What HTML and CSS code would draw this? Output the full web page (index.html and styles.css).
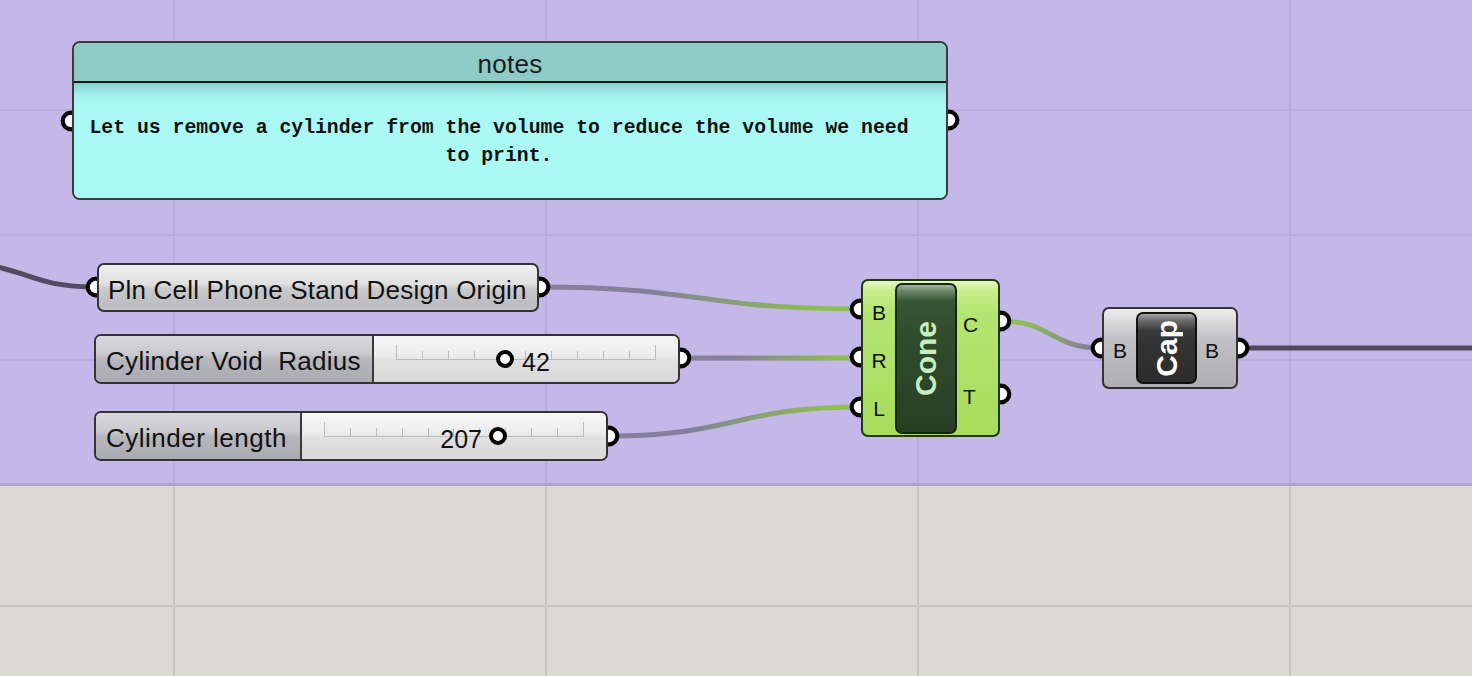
FILE: index.html
```html
<!DOCTYPE html>
<html lang="en">
<head>
<meta charset="utf-8">
<title>Grasshopper canvas</title>
<link rel="stylesheet" href="styles.css">
</head>
<body>
<div class="canvas">
  <svg class="backdrop" width="1472" height="676" viewBox="0 0 1472 676" xmlns="http://www.w3.org/2000/svg">
    <defs>
      <linearGradient id="wPln" gradientUnits="userSpaceOnUse" x1="539" y1="0" x2="861" y2="0">
        <stop offset="0" stop-color="#86819a"/>
        <stop offset="0.35" stop-color="#84809a"/>
        <stop offset="0.85" stop-color="#8cbd53"/>
        <stop offset="1" stop-color="#8dc04f"/>
      </linearGradient>
      <linearGradient id="wRad" gradientUnits="userSpaceOnUse" x1="680" y1="0" x2="861" y2="0">
        <stop offset="0" stop-color="#86819a"/>
        <stop offset="0.3" stop-color="#84809a"/>
        <stop offset="0.85" stop-color="#8cbd53"/>
        <stop offset="1" stop-color="#8dc04f"/>
      </linearGradient>
      <linearGradient id="wLen" gradientUnits="userSpaceOnUse" x1="608" y1="0" x2="861" y2="0">
        <stop offset="0" stop-color="#86819a"/>
        <stop offset="0.3" stop-color="#84809a"/>
        <stop offset="0.85" stop-color="#8cbd53"/>
        <stop offset="1" stop-color="#8dc04f"/>
      </linearGradient>
      <linearGradient id="wCone" gradientUnits="userSpaceOnUse" x1="1000" y1="0" x2="1102" y2="0">
        <stop offset="0" stop-color="#8dc04f"/>
        <stop offset="0.3" stop-color="#8cbb55"/>
        <stop offset="0.85" stop-color="#84809a"/>
        <stop offset="1" stop-color="#86819a"/>
      </linearGradient>
    </defs>

    <!-- canvas -->
    <rect x="0" y="0" width="1472" height="676" fill="#dcd9d3"/>
    <g stroke="#c7c4bf" stroke-width="2">
      <line x1="174" y1="485" x2="174" y2="676"/>
      <line x1="546" y1="485" x2="546" y2="676"/>
      <line x1="918" y1="485" x2="918" y2="676"/>
      <line x1="1290" y1="485" x2="1290" y2="676"/>
      <line x1="0" y1="606" x2="1472" y2="606"/>
    </g>

    <!-- group -->
    <rect x="0" y="0" width="1472" height="485" fill="#c4b8e9"/>
    <g stroke="#b9addf" stroke-width="2">
      <line x1="174" y1="0" x2="174" y2="484"/>
      <line x1="546" y1="0" x2="546" y2="484"/>
      <line x1="918" y1="0" x2="918" y2="484"/>
      <line x1="1290" y1="0" x2="1290" y2="484"/>
      <line x1="0" y1="110" x2="1472" y2="110"/>
      <line x1="0" y1="235" x2="1472" y2="235"/>
      <line x1="0" y1="360" x2="1472" y2="360"/>
    </g>
    <line x1="0" y1="484.5" x2="1472" y2="484.5" stroke="#afa4d0" stroke-width="3"/>

    <!-- wires -->
    <g fill="none" stroke-width="5" stroke-linecap="round">
      <path d="M-60 262 C30 262 20 287 97 287" stroke="#524c63"/>
      <path d="M539 287 C700 287 700 309 861 309" stroke="url(#wPln)"/>
      <path d="M680 358 L861 358" stroke="url(#wRad)"/>
      <path d="M608 436 C735 436 735 407 861 407" stroke="url(#wLen)"/>
      <path d="M1000 321 C1052 321 1050 348 1102 348" stroke="url(#wCone)"/>
      <path d="M1238 348 L1480 348" stroke="#4e495c"/>
    </g>

    <!-- grips -->
    <g fill="#ffffff" stroke="#000000" stroke-width="4.2">
      <circle cx="71" cy="121" r="8.3"/>
      <circle cx="949" cy="120" r="8.3"/>
      <circle cx="96" cy="287" r="8.3"/>
      <circle cx="540" cy="287" r="8.3"/>
      <circle cx="681" cy="358" r="8.3"/>
      <circle cx="609" cy="436" r="8.3"/>
      <circle cx="860" cy="309" r="8.3"/>
      <circle cx="860" cy="357" r="8.3"/>
      <circle cx="860" cy="407" r="8.3"/>
      <circle cx="1001" cy="321" r="8.3"/>
      <circle cx="1001" cy="394" r="8.3"/>
      <circle cx="1101" cy="348" r="8.3"/>
      <circle cx="1239" cy="348" r="8.3"/>
    </g>
  </svg>

  <div class="node panel">
    <div class="panel-head">notes</div>
    <div class="panel-body">Let us remove a cylinder from the volume to reduce the volume we need to print.</div>
  </div>

  <div class="node param param-pln">Pln Cell Phone Stand Design Origin</div>

  <div class="node slider slider-radius">
    <div class="slider-label">Cylinder Void  Radius</div>
    <div class="slider-area">
      <div class="track">
        <span class="tick end"></span><span class="tick"></span><span class="tick"></span><span class="tick"></span><span class="tick"></span><span class="tick"></span><span class="tick"></span><span class="tick"></span><span class="tick"></span><span class="tick"></span><span class="tick end"></span>
      </div>
      <span class="knob"></span>
      <span class="value">42</span>
    </div>
  </div>

  <div class="node slider slider-length">
    <div class="slider-label">Cylinder length</div>
    <div class="slider-area">
      <div class="track">
        <span class="tick end"></span><span class="tick"></span><span class="tick"></span><span class="tick"></span><span class="tick"></span><span class="tick"></span><span class="tick"></span><span class="tick"></span><span class="tick"></span><span class="tick"></span><span class="tick end"></span>
      </div>
      <span class="knob"></span>
      <span class="value">207</span>
    </div>
  </div>

  <div class="node comp cone">
    <div class="ports ports-in">
      <div class="port">B</div>
      <div class="port">R</div>
      <div class="port">L</div>
    </div>
    <div class="inner"><span class="inner-name">Cone</span></div>
    <div class="ports ports-out">
      <div class="port">C</div>
      <div class="port">T</div>
    </div>
  </div>

  <div class="node comp cap">
    <div class="ports ports-in">
      <div class="port">B</div>
    </div>
    <div class="inner"><span class="inner-name">Cap</span></div>
    <div class="ports ports-out">
      <div class="port">B</div>
    </div>
  </div>
</div>
</body>
</html>
```

FILE: styles.css
```css
* {
  box-sizing: border-box;
}

html,
body {
  margin: 0;
  padding: 0;
  width: 1472px;
  height: 676px;
  overflow: hidden;
}

body {
  font-family: "Liberation Sans", Arial, sans-serif;
  color: #111111;
}

.canvas {
  position: relative;
  width: 1472px;
  height: 676px;
  overflow: hidden;
}

.backdrop {
  position: absolute;
  left: 0;
  top: 0;
  display: block;
}

.node {
  position: absolute;
}

/* ---------- notes panel ---------- */
.panel {
  left: 72px;
  top: 41px;
  width: 876px;
  height: 159px;
  border: 2px solid #3b3b3b;
  border-radius: 8px;
  overflow: hidden;
  display: flex;
  flex-direction: column;
}

.panel-head {
  height: 40px;
  flex: none;
  background: #8ecac6;
  border-bottom: 2px solid #1a1a1a;
  display: flex;
  align-items: center;
  justify-content: center;
  padding-top: 4px;
  font-size: 26px;
  letter-spacing: 0.3px;
  color: #1c1c1c;
}

.panel-body {
  flex: 1;
  background: linear-gradient(#86d0cb 0px, #a2efeb 12px, #abf9f5 24px);
  padding: 31px 27px 0 5px;
  font-family: "Liberation Mono", "Courier New", monospace;
  font-weight: bold;
  font-size: 19.8px;
  line-height: 28px;
  text-align: center;
  color: #111111;
}

/* ---------- parameter ---------- */
.param {
  border: 2px solid #333333;
  border-radius: 7px;
  display: flex;
  align-items: center;
  padding: 5px 0 0 9px;
  font-size: 26px;
  letter-spacing: 0.2px;
  white-space: pre;
  background: linear-gradient(#efefef 0%, #e0e0e0 42%, #cacacd 52%, #bcbcc0 92%, #c6c6ca 100%);
}

.param-pln {
  left: 97px;
  top: 263px;
  width: 442px;
  height: 49px;
}

/* ---------- sliders ---------- */
.slider {
  display: flex;
  border: 2px solid #333333;
  border-radius: 7px;
  overflow: hidden;
  height: 50px;
}

.slider-radius {
  left: 94px;
  top: 334px;
  width: 586px;
}

.slider-length {
  left: 94px;
  top: 411px;
  width: 514px;
}

.slider-label {
  flex: none;
  display: flex;
  align-items: center;
  padding: 5px 0 0 10px;
  border-right: 2px solid #3a3a3a;
  font-size: 26px;
  letter-spacing: 0.3px;
  white-space: pre;
  background: linear-gradient(#d9d9dd 0%, #cbcbcf 38%, #b6b6bc 52%, #aaaab2 100%);
}

.slider-radius .slider-label {
  width: 278px;
}

.slider-length .slider-label {
  width: 206px;
  letter-spacing: 0.5px;
}

.slider-area {
  flex: 1;
  position: relative;
  background: linear-gradient(#f7f7f7 0%, #ececec 42%, #e0e0e0 56%, #d8d8d8 100%);
}

.track {
  position: absolute;
  left: 22px;
  right: 22px;
  top: 9px;
  height: 15px;
  display: flex;
  justify-content: space-between;
  align-items: flex-end;
  border-bottom: 1px solid #bcbcbc;
}

.tick {
  width: 1px;
  height: 8px;
  background: #bcbcbc;
}

.tick.end {
  height: 14px;
}

.knob {
  position: absolute;
  top: 14px;
  width: 18px;
  height: 18px;
  border: 4.5px solid #000000;
  border-radius: 50%;
  background: #ffffff;
}

.value {
  position: absolute;
  top: 14px;
  font-size: 25px;
  line-height: 25px;
  color: #111111;
}

.slider-radius .knob {
  left: 122px;
}

.slider-radius .value {
  left: 148px;
}

.slider-length .knob {
  left: 187px;
}

.slider-length .value {
  right: 124px;
}

/* ---------- components ---------- */
.comp {
  display: flex;
  border: 2px solid #333333;
  border-radius: 7px;
}

.ports {
  display: flex;
  flex-direction: column;
  padding: 3.5px 0;
}

.port {
  flex: 1;
  display: flex;
  align-items: center;
  padding-top: 5px;
  font-size: 21px;
  color: #111111;
}

.ports-in {
  width: 32px;
}

.ports-in .port {
  justify-content: center;
}

.inner {
  display: flex;
  align-items: center;
  justify-content: center;
  border: 2px solid #111111;
  border-radius: 7px;
}

.inner-name {
  writing-mode: vertical-rl;
  transform: rotate(180deg);
  font-weight: bold;
  font-size: 30px;
  line-height: 1;
}

.cone {
  left: 861px;
  top: 279px;
  width: 139px;
  height: 158px;
  padding: 2px 0 1px;
  border-color: #1d3a10;
  background: linear-gradient(#e4f8c2 0px, #c6ee8c 10px, #b4e572 30px, #a7dc5c 100%);
}

.cone .inner {
  width: 62px;
  border-color: #14260c;
  background: linear-gradient(#a3b5a1 0px, #6a876a 6px, #365634 16px, #2e4b2c 40%, #283f26 100%);
}

.cone .inner-name {
  color: #c7efbd;
}

.cone .ports-out {
  width: 41px;
}

.cone .ports-out .port {
  padding-left: 6px;
}

.cap {
  left: 1102px;
  top: 307px;
  width: 136px;
  height: 82px;
  padding: 3px 0;
  background: linear-gradient(#eeeeee 0px, #dadada 12px, #c0c0c4 40%, #aeaeb4 100%);
}

.cap .inner {
  width: 61px;
  background: linear-gradient(#a9a9a9 0px, #6e6e6e 6px, #3c3c3c 16px, #333333 40%, #2c2c2c 100%);
}

.cap .inner-name {
  color: #ffffff;
}

.cap .ports-out {
  width: 39px;
}

.cap .ports-out .port {
  padding-left: 8px;
}
```
